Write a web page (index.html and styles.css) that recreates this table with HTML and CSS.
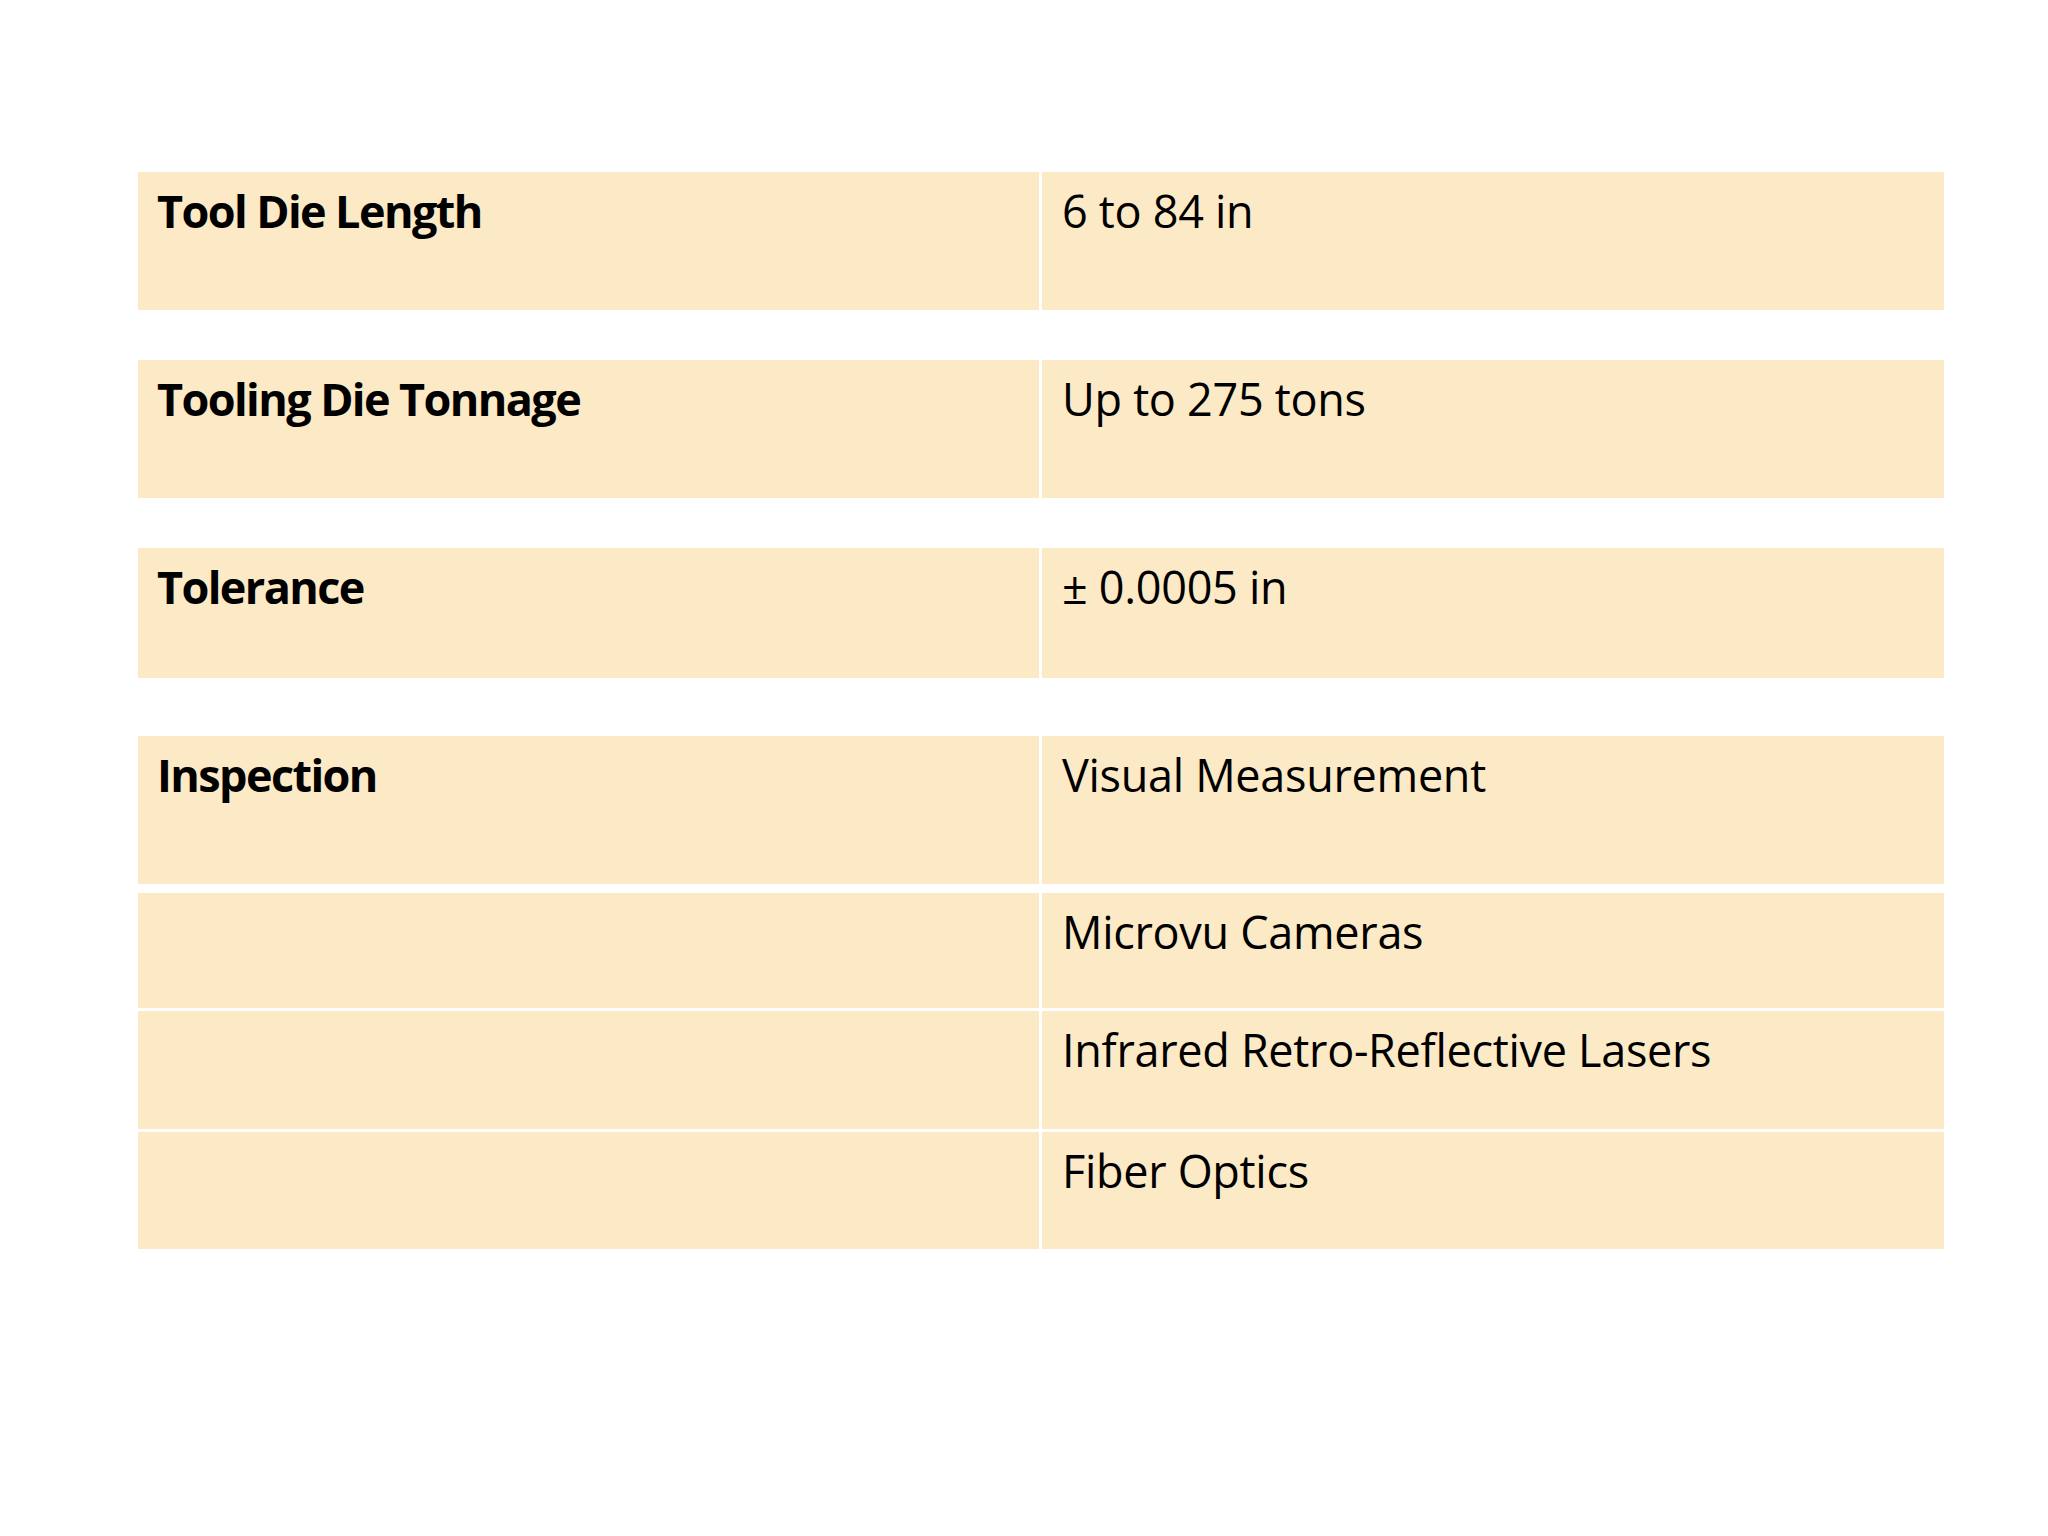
FILE: index.html
```html
<!DOCTYPE html>
<html lang="en">
<head>
<meta charset="utf-8">
<title>Tooling Specifications</title>
<link rel="stylesheet" href="styles.css">
</head>
<body>
<main class="slide">
  <section class="specs">
    <div class="row r-short gap-lg">
      <div class="cell label">Tool Die Length</div>
      <div class="cell value">6 to 84 in</div>
    </div>
    <div class="row r-short gap-lg">
      <div class="cell label">Tooling Die Tonnage</div>
      <div class="cell value">Up to 275 tons</div>
    </div>
    <div class="row r-tol gap-xl">
      <div class="cell label">Tolerance</div>
      <div class="cell value">± 0.0005 in</div>
    </div>
    <div class="row r-insp gap-sm">
      <div class="cell label">Inspection</div>
      <div class="cell value">Visual Measurement</div>
    </div>
    <div class="row r-sub1 gap-xs">
      <div class="cell label"></div>
      <div class="cell value">Microvu Cameras</div>
    </div>
    <div class="row r-sub2 gap-xs">
      <div class="cell label"></div>
      <div class="cell value">Infrared Retro-Reflective Lasers</div>
    </div>
    <div class="row r-sub3">
      <div class="cell label"></div>
      <div class="cell value">Fiber Optics</div>
    </div>
  </section>
</main>
</body>
</html>
```
FILE: styles.css
```css
html, body {
  margin: 0;
  padding: 0;
  background: #ffffff;
}

.slide {
  width: 2048px;
  height: 1536px;
  box-sizing: border-box;
  padding: 172px 104px 0 138px;
  font-family: "Open Sans", "Noto Sans", sans-serif;
  color: #000000;
}

.specs {
  display: flex;
  flex-direction: column;
  width: 1806px;
}

.row {
  display: grid;
  grid-template-columns: 901px 902px;
  column-gap: 3px;
}

.r-short { height: 138px; }
.r-tol   { height: 130px; }
.r-insp  { height: 148px; }
.r-sub1  { height: 115px; }
.r-sub2  { height: 118px; }
.r-sub3  { height: 117px; }

.gap-lg { margin-bottom: 50px; }
.gap-xl { margin-bottom: 58px; }
.gap-sm { margin-bottom: 9px; }
.gap-xs { margin-bottom: 3px; }

.cell {
  background: #fce9c6;
  box-sizing: border-box;
  padding: 9px 20px 0 20px;
  font-size: 45px;
  line-height: 60px;
  white-space: nowrap;
}

.label {
  font-weight: 700;
  letter-spacing: -1.6px;
  padding-left: 19px;
}

.value {
  font-weight: 400;
  letter-spacing: -0.3px;
}
```
